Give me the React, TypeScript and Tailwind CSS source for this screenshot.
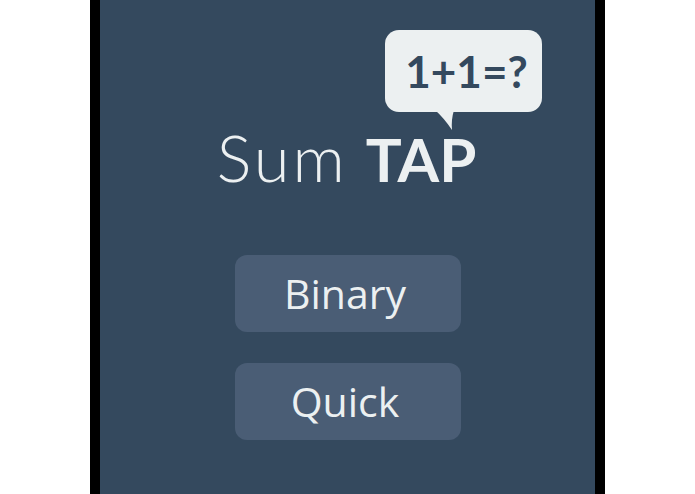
import React from 'react';

const modes = ['Binary', 'Quick'];

// speech bubble with the little sum in it
const Bubble: React.FC = () => (
  <div className="absolute left-[285px] top-[30px] w-[157px] h-[82px]">
    <div className="w-full h-full rounded-[14px] bg-[#ecf0f1] flex items-center justify-center">
      <span className="font-['Lato',sans-serif] font-bold text-[44px] leading-none text-[#34495e] pl-[6px]">
        1+1=?
      </span>
    </div>
    <svg className="absolute left-[47px] top-[80px]" width="30" height="22" viewBox="0 0 30 22">
      <path d="M3 0 Q12 8 20 20 Q19 10 22 0 Z" fill="#ecf0f1" />
    </svg>
  </div>
);

export default function App() {
  return (
    <div className="w-full h-[494px] bg-white flex justify-center overflow-hidden">
      <div className="w-[515px] h-full border-x-[10px] border-black bg-[#34495e] relative flex flex-col items-center">
        <Bubble />

        <h1 className="mt-[121px] h-[72px] flex items-baseline text-[#ecf0f1] font-['Lato',sans-serif] pr-[2px]">
          <span className="font-light text-[65px] leading-[72px] tracking-[3px]">Sum</span>
          <span className="font-bold text-[60px] leading-[72px] ml-[18px]">TAP</span>
        </h1>

        <div className="mt-[62px] flex flex-col gap-[31px]">
          {modes.map((m) => (
            <button
              key={m}
              className="w-[226px] h-[77px] rounded-[12px] bg-[#4a5d75] text-[#ecf0f1] text-[41px] font-['Open_Sans',sans-serif] flex items-center justify-center pr-[5px]"
            >
              {m}
            </button>
          ))}
        </div>
      </div>
    </div>
  );
}
